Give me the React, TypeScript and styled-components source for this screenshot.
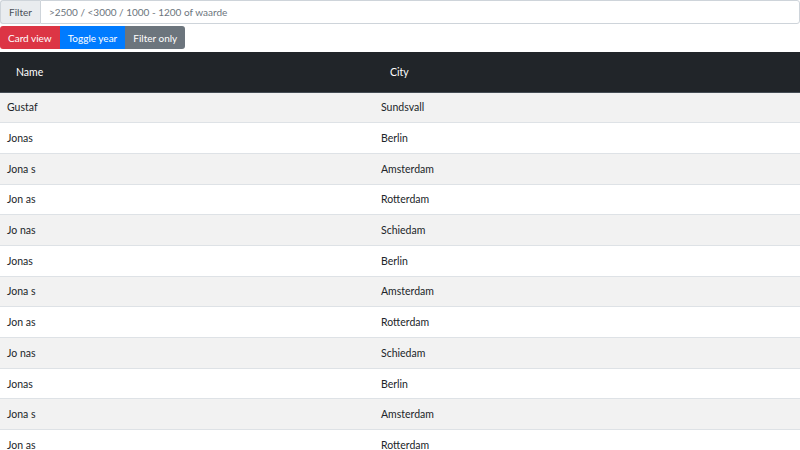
import { styled, createGlobalStyle } from "styled-components";

const GlobalStyle = createGlobalStyle`
  html, body {
    margin: 0;
    padding: 0;
    background: #ffffff;
    font-family: Lato, "Open Sans", sans-serif;
    color: #212529;
  }
`;

const people = [
  { name: "Gustaf", city: "Sundsvall" },
  { name: "Jonas", city: "Berlin" },
  { name: "Jona s", city: "Amsterdam" },
  { name: "Jon as", city: "Rotterdam" },
  { name: "Jo nas", city: "Schiedam" },
  { name: "Jonas", city: "Berlin" },
  { name: "Jona s", city: "Amsterdam" },
  { name: "Jon as", city: "Rotterdam" },
  { name: "Jo nas", city: "Schiedam" },
  { name: "Jonas", city: "Berlin" },
  { name: "Jona s", city: "Amsterdam" },
  { name: "Jon as", city: "Rotterdam" },
  { name: "Jo nas", city: "Schiedam" },
];

export default function App() {
  return (
    <Page>
      <GlobalStyle />
      <InputGroup>
        <Addon>Filter</Addon>
        <FilterInput type="text" placeholder=">2500 / <3000 / 1000 - 1200 of waarde" />
      </InputGroup>
      <ButtonGroup>
        <Button $color="#dc3545">Card view</Button>
        <Button $color="#007bff">Toggle year</Button>
        <Button $color="#6c757d">Filter only</Button>
      </ButtonGroup>
      <Table>
        <thead>
          <tr>
            <Th style={{ width: 374 }}>Name</Th>
            <Th>City</Th>
          </tr>
        </thead>
        <tbody>
          {people.map((p, i) => (
            <Row key={i} $striped={i % 2 === 0}>
              <Td>{p.name}</Td>
              <Td>{p.city}</Td>
            </Row>
          ))}
        </tbody>
      </Table>
    </Page>
  );
}

const Page = styled.div`
  width: 800px;
  font-size: 10.5px;
`;

const InputGroup = styled.div`
  display: flex;
  height: 24px;
`;

const Addon = styled.span`
  display: flex;
  align-items: center;
  padding: 0 8px 0 8px;
  background-color: #e9ecef;
  border: 1px solid #ced4da;
  border-right: none;
  border-radius: 3px 0 0 3px;
  color: #495057;
  font-size: 10px;
`;

const FilterInput = styled.input`
  flex: 1;
  border: 1px solid #ced4da;
  border-radius: 0 3px 3px 0;
  padding: 0 8px;
  font-family: inherit;
  font-size: 10px;
  color: #495057;
  outline: none;

  &::placeholder {
    color: #6c757d;
  }
`;

const ButtonGroup = styled.div`
  display: flex;
  margin-top: 2px;
  margin-bottom: 3px;
`;

const Button = styled.button<{ $color: string }>`
  background-color: ${(p) => p.$color};
  color: #ffffff;
  border: none;
  height: 23px;
  padding: 0 8px;
  font-family: inherit;
  font-size: 10px;
  border-radius: 0;

  &:first-child {
    border-radius: 3px 0 0 3px;
  }
  &:last-child {
    border-radius: 0 3px 3px 0;
  }
`;

const Table = styled.table`
  width: 100%;
  border-collapse: collapse;
`;

const Th = styled.th`
  background-color: #212529;
  color: #ffffff;
  font-weight: normal;
  text-align: left;
  height: 40px;
  padding: 0 16px;
  border-bottom: 1px solid #454d55;
  box-sizing: border-box;
`;

const Row = styled.tr<{ $striped: boolean }>`
  background-color: ${(p) => (p.$striped ? "#f2f2f2" : "#ffffff")};
`;

const Td = styled.td`
  height: 30.7px;
  padding: 0 7px;
  border-bottom: 1px solid #dee2e6;
  box-sizing: border-box;
`;
